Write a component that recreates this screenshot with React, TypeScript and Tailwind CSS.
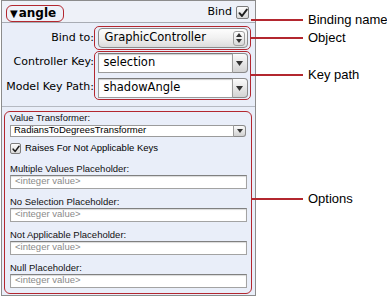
import React from "react";

const RED = "border-[#b3272f]";
const UI = "font-['DejaVu_Sans','Liberation_Sans',sans-serif]";
const SMALL = "font-['Liberation_Sans',Arial,sans-serif] text-[9.5px]";

function Check({ size = 13 }: { size?: number }) {
  return (
    <span
      className="inline-flex items-center justify-center rounded-[2px] border border-[#7d7d7d] bg-gradient-to-b from-[#fdfdfd] to-[#d9d9d9]"
      style={{ width: size, height: size }}
    >
      <svg width={size - 3} height={size - 3} viewBox="0 0 10 10">
        <path d="M1.5 5.2 L4 8 L8.8 1.6" fill="none" stroke="#1e1e1e" strokeWidth="1.9" strokeLinecap="round" strokeLinejoin="round" />
      </svg>
    </span>
  );
}

function Combo({ value }: { value: string }) {
  return (
    <div className="flex h-[20px] w-[150px]">
      <div className="flex flex-1 items-center border border-[#9b9b9b] border-t-[#7a7a7a] bg-white pl-[5px] text-[11.5px] text-black shadow-[inset_0_1px_1px_rgba(0,0,0,0.2)]">
        {value}
      </div>
      <div className="flex w-[15px] items-center justify-center rounded-r-[4px] border border-l-0 border-[#8a8a8a] bg-gradient-to-b from-[#fbfbfb] to-[#d3d3d3]">
        <svg width="7" height="5" viewBox="0 0 7 5"><path d="M0 0 H7 L3.5 5Z" fill="#333" /></svg>
      </div>
    </div>
  );
}

function Field({ label }: { label: string }) {
  return (
    <div className="flex flex-col">
      <div className={`h-[11px] ${SMALL} leading-[11px] text-[#111]`}>{label}</div>
      <div className={`mt-[1px] flex h-[14px] w-[237px] items-center border border-[#a3a3a3] border-t-[#808080] bg-white pl-[4px] ${SMALL} text-[#8a8a8a] shadow-[inset_0_1px_1px_rgba(0,0,0,0.15)]`}>
        &lt;integer value&gt;
      </div>
    </div>
  );
}

function Callout({ top, label }: { top: number; label: string }) {
  return (
    <div className="absolute left-[251px] flex items-center whitespace-nowrap" style={{ top: top - 8 }}>
      <div className="h-[1.5px] w-[52px] shrink-0 bg-[#b3272f]" />
      <span className="ml-[5px] font-['Liberation_Sans',Arial,sans-serif] text-[13px] leading-[16px] text-black">{label}</span>
    </div>
  );
}

export default function App() {
  return (
    <div className={`relative h-[299px] w-[387px] overflow-hidden bg-white ${UI}`}>
      <div className="ml-[1px] flex h-[296px] w-[255px] flex-col border border-[#8c8c8c] bg-[#e9eef9]">
        {/* header */}
        <div className="flex h-[22px] items-center justify-between border-b border-[#a8acb4] bg-[#eef1f8] pl-[4px] pr-[6px]">
          <div className={`mt-[3px] flex h-[17px] w-[58px] items-center rounded-[6px] border-[1.5px] ${RED} pl-[3px] text-[12px] font-bold text-black`}>
            <span className="mr-[1px] text-[10px]">▼</span>angle
          </div>
          <div className="mt-[2px] flex items-center gap-[4px] text-[11px] text-black">
            Bind <Check />
          </div>
        </div>

        {/* binding target */}
        <div className="flex pt-[3px]">
          <div className="flex w-[92px] flex-col items-end text-[11px] text-black">
            <div className="flex h-[24px] items-center">Bind to:</div>
            <div className="flex h-[25px] items-center">Controller Key:</div>
            <div className="flex h-[25px] items-center">Model Key Path:</div>
          </div>
          <div className="flex flex-col">
            <div className={`flex h-[24px] w-[157px] items-center rounded-[5px] border-[1.5px] ${RED} pl-[2.5px]`}>
              <div className="flex h-[20px] w-[150px] items-center justify-between rounded-[4px] border border-[#8c8c8c] bg-gradient-to-b from-[#fdfdfd] via-[#f1f1f1] to-[#dcdcdc] pl-[6px] pr-[2px] text-[11.5px] text-black">
                GraphicController
                <div className="flex h-[15px] w-[12px] items-center justify-center rounded-[3px] border border-[#a0a0a0] bg-gradient-to-b from-white to-[#d8d8d8]">
                  <svg width="6" height="10" viewBox="0 0 6 10"><path d="M0 4 L3 0 L6 4Z M0 6 L3 10 L6 6Z" fill="#333" /></svg>
                </div>
              </div>
            </div>
            <div className={`mt-[1px] flex h-[49px] w-[157px] flex-col justify-between rounded-[5px] border-[1.5px] ${RED} py-[1px] pl-[2.5px]`}>
              <Combo value="selection" />
              <Combo value="shadowAngle" />
            </div>
          </div>
        </div>

        <div className="mt-[6px] h-px w-full bg-[#b5b9c2]" />

        {/* options */}
        <div className={`ml-[2px] mt-[4px] flex h-[183px] w-[248px] flex-col rounded-[6px] border-[1.5px] ${RED} pl-[5px]`}>
          <div className={`h-[11px] ${SMALL} leading-[11px] text-[#111]`}>Value Transformer:</div>
          <div className="mt-[1.5px] flex h-[12px] w-[236px]">
            <div className={`flex flex-1 items-center border border-[#9b9b9b] bg-white pl-[3px] ${SMALL} text-black`}>RadiansToDegreesTransformer</div>
            <div className="flex w-[12px] items-center justify-center rounded-r-[3px] border border-l-0 border-[#8a8a8a] bg-gradient-to-b from-[#fbfbfb] to-[#d0d0d0]">
              <svg width="6" height="4" viewBox="0 0 6 4"><path d="M0 0 H6 L3 4Z" fill="#333" /></svg>
            </div>
          </div>
          <div className={`mt-[6px] flex h-[12px] items-center gap-[4px] ${SMALL} text-black`}>
            <Check size={11} /> Raises For Not Applicable Keys
          </div>
          <div className="mt-[8px] flex flex-col gap-[7px]">
            <Field label="Multiple Values Placeholder:" />
            <Field label="No Selection Placeholder:" />
            <Field label="Not Applicable Placeholder:" />
            <Field label="Null Placeholder:" />
          </div>
        </div>
      </div>

      <Callout top={20} label="Binding name" />
      <Callout top={38} label="Object" />
      <Callout top={75} label="Key path" />
      <Callout top={199} label="Options" />
    </div>
  );
}
